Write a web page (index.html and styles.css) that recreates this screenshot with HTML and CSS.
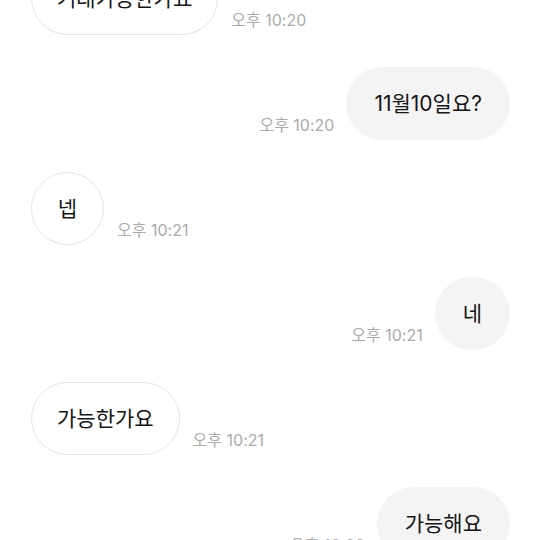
FILE: index.html
```html
<!DOCTYPE html>
<html lang="ko">
<head>
  <meta charset="UTF-8" />
  <meta name="viewport" content="width=device-width, initial-scale=1.0"/>
  <title>채팅</title>
  <link rel="stylesheet" href="styles.css">
</head>
<body>

<div class="chat">
  <div class="row recv first">
    <div class="bubble">거래가능한가요</div>
    <span class="time">오후 10:20</span>
  </div>
  <div class="row sent">
    <span class="time">오후 10:20</span>
    <div class="bubble">11월10일요?</div>
  </div>
  <div class="row recv">
    <div class="bubble">넵</div>
    <span class="time">오후 10:21</span>
  </div>
  <div class="row sent">
    <span class="time">오후 10:21</span>
    <div class="bubble">네</div>
  </div>
  <div class="row recv">
    <div class="bubble">가능한가요</div>
    <span class="time">오후 10:21</span>
  </div>
  <div class="row sent">
    <span class="time">오후 10:22</span>
    <div class="bubble">가능해요</div>
  </div>
</div>

</body>
</html>
```

FILE: styles.css
```css
* { box-sizing: border-box; }
body {
  margin: 0;
  background: #fff;
  color: #151515;
  font-family: Inter, "Noto Sans CJK KR", sans-serif;
  height: 540px;
  overflow: hidden;
}
.chat {
  display: flex;
  flex-direction: column;
  gap: 32px;
  padding: 0 30px 0 31px;
}
.row {
  display: flex;
  align-items: flex-end;
  gap: 13px;
}
.row.first {
  margin-top: -38px;
}
.sent {
  justify-content: flex-end;
  gap: 12px;
}
.bubble {
  font-size: 21px;
  line-height: 25px;
  min-width: 73px;
  text-align: center;
  border-radius: 37px;
  white-space: nowrap;
}
.recv .bubble {
  background: #fff;
  border: 1px solid #e4e4e4;
  padding: 23px 25px;
}
.sent .bubble {
  background: #f4f4f4;
  padding: 24px 28px;
}
.time {
  font-size: 16px;
  line-height: 18px;
  color: #ababab;
  margin-bottom: 6px;
  white-space: nowrap;
}
```
